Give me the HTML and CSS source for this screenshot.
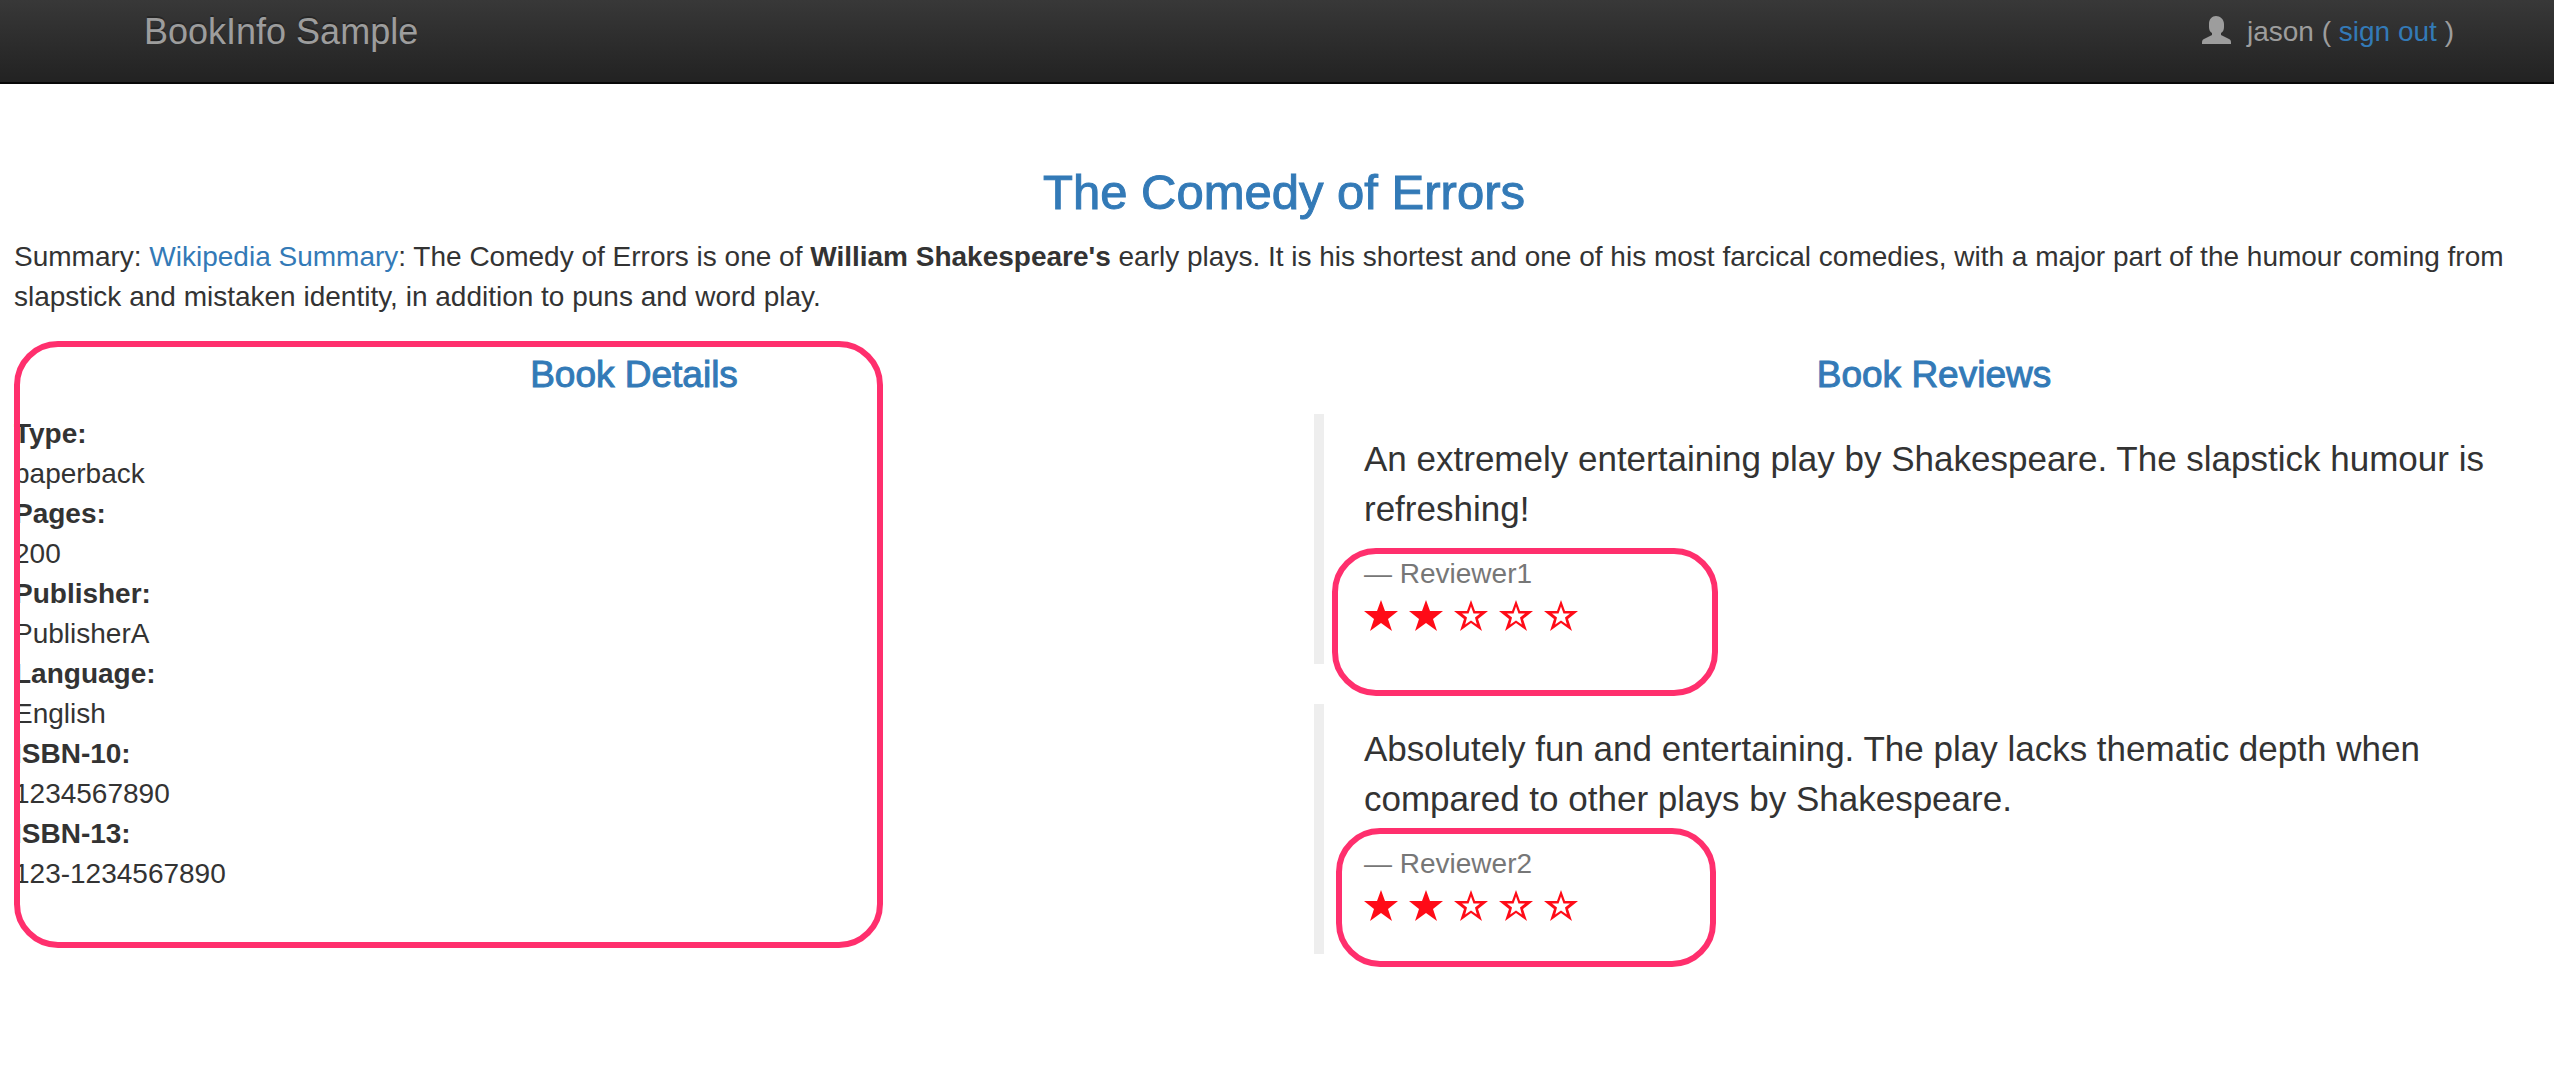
FILE: index.html
```
<!DOCTYPE html>
<html lang="en">
<head>
    <meta charset="UTF-8">
    <meta name="viewport" content="width=device-width, initial-scale=1.0">
    <title>Simple Bookstore App</title>
    <link rel="stylesheet" href="styles.css">
</head>
<body>
    <svg class="sprite" aria-hidden="true">
        <symbol id="user" viewBox="0 0 29 28">
            <path d="M7 8C7 3 10 0 14 0s8 3 8 8v3c0 3-1 5-3 6v2l8 4c2 1 2 2 2 5H0c0-3 0-4 2-5l8-4v-2c-2-1-3-3-3-6z"/>
        </symbol>
        <symbol id="star" viewBox="0 0 34 31">
            <path d="M17 0l4 11h13l-10 8 4 12-11-8-11 8 4-12L0 11h13z"/>
        </symbol>
        <symbol id="star-empty" viewBox="0 0 34 31">
            <path fill-rule="evenodd" d="M17 0l4 11h13l-10 8 4 12-11-8-11 8 4-12L0 11h13zM17 6.5L14.5 13.5H8L13 17.5 11.2 24.5 17 20.5 22.8 24.5 21 17.5 26 13.5H19.5z"/>
        </symbol>
    </svg>

    <nav class="navbar">
        <a class="navbar-brand" href="#">BookInfo Sample</a>
        <p class="navbar-text">
            <svg class="user-icon"><use href="#user"/></svg>
            <span>jason ( <a href="#">sign out</a> )</span>
        </p>
    </nav>

    <main class="container">
        <h3>The Comedy of Errors</h3>
        <p class="summary">Summary: <a href="#">Wikipedia Summary</a>: The Comedy of Errors is one of <b>William Shakespeare's</b> early plays. It is his shortest and one of his most farcical comedies, with a major part of the humour coming from slapstick and mistaken identity, in addition to puns and word play.</p>

        <div class="row">
            <section class="details">
                <h4>Book Details</h4>
                <dl>
                    <dt>Type:</dt><dd>paperback</dd>
                    <dt>Pages:</dt><dd>200</dd>
                    <dt>Publisher:</dt><dd>PublisherA</dd>
                    <dt>Language:</dt><dd>English</dd>
                    <dt>ISBN-10:</dt><dd>1234567890</dd>
                    <dt>ISBN-13:</dt><dd>123-1234567890</dd>
                </dl>
                <div class="marker marker-details"></div>
            </section>

            <section class="reviews">
                <h4>Book Reviews</h4>
                <blockquote>
                    <p>An extremely entertaining play by Shakespeare. The slapstick humour is refreshing!</p>
                    <small>Reviewer1</small>
                    <div class="stars">
                        <svg><use href="#star"/></svg>
                        <svg><use href="#star"/></svg>
                        <svg><use href="#star-empty"/></svg>
                        <svg><use href="#star-empty"/></svg>
                        <svg><use href="#star-empty"/></svg>
                    </div>
                    <div class="marker marker-first"></div>
                </blockquote>
                <blockquote>
                    <p>Absolutely fun and entertaining. The play lacks thematic depth when compared to other plays by Shakespeare.</p>
                    <small>Reviewer2</small>
                    <div class="stars">
                        <svg><use href="#star"/></svg>
                        <svg><use href="#star"/></svg>
                        <svg><use href="#star-empty"/></svg>
                        <svg><use href="#star-empty"/></svg>
                        <svg><use href="#star-empty"/></svg>
                    </div>
                    <div class="marker marker-second"></div>
                </blockquote>
            </section>
        </div>
    </main>
</body>
</html>
```
FILE: styles.css
```
* {
    box-sizing: border-box;
}

body {
    margin: 0;
    font-family: "Liberation Sans", Arial, sans-serif;
    font-size: 28px;
    line-height: 40px;
    color: #333;
    background-color: #fff;
}

a {
    color: #337ab7;
    text-decoration: none;
}

.sprite {
    display: none;
}

/* Navbar */
.navbar {
    display: flex;
    justify-content: space-between;
    align-items: flex-start;
    height: 84px;
    padding: 12px 100px 0 144px;
    background-image: linear-gradient(#383838, #222);
    border-bottom: 2px solid #080808;
}

.navbar-brand {
    font-size: 36px;
    color: #9d9d9d;
    text-shadow: 0 -2px 0 rgba(0, 0, 0, .25);
}

.navbar-text {
    display: flex;
    gap: 16px;
    margin: 0;
    color: #9d9d9d;
}

.user-icon {
    width: 29px;
    height: 28px;
    margin-top: 4px;
    fill: #9d9d9d;
}

/* Content */
.container {
    padding: 81px 0 0 14px;
}

h3,
h4 {
    margin: 0 0 18px;
    font-weight: 500;
    color: #337ab7;
    text-align: center;
    -webkit-text-stroke: 1px #337ab7;
}

h3 {
    font-size: 49px;
    line-height: 54px;
}

h4 {
    font-size: 37px;
    line-height: 42px;
}

.summary {
    margin: 0 0 37px;
}

.row {
    display: grid;
    grid-template-columns: 1fr 1fr;
    gap: 60px;
}

.details {
    position: relative;
}

dl {
    margin: 0;
}

dt {
    font-weight: bold;
}

dd {
    margin: 0;
}

/* Reviews */
blockquote {
    position: relative;
    margin: 0 0 40px;
    padding: 20px 40px;
    border-left: 10px solid #eee;
}

blockquote p {
    margin: 0 0 20px;
    font-size: 35px;
    line-height: 50px;
}

blockquote small {
    display: block;
    font-size: 28px;
    color: #777;
}

blockquote small::before {
    content: "\2014 \00A0";
}

.stars {
    display: flex;
    gap: 11px;
    height: 50px;
    padding-top: 6px;
}

.stars svg {
    width: 34px;
    height: 31px;
    fill: #ff0b17;
}

/* Outlines drawn over the content */
.marker {
    position: absolute;
    border: 6px solid #ff2f6d;
    border-radius: 44px;
    pointer-events: none;
}

.marker-details {
    top: -13px;
    left: 0;
    width: 869px;
    height: 607px;
}

.marker-first {
    top: 134px;
    left: 8px;
    width: 386px;
    height: 148px;
}

.marker-second {
    top: 124px;
    left: 12px;
    width: 380px;
    height: 139px;
}
```
